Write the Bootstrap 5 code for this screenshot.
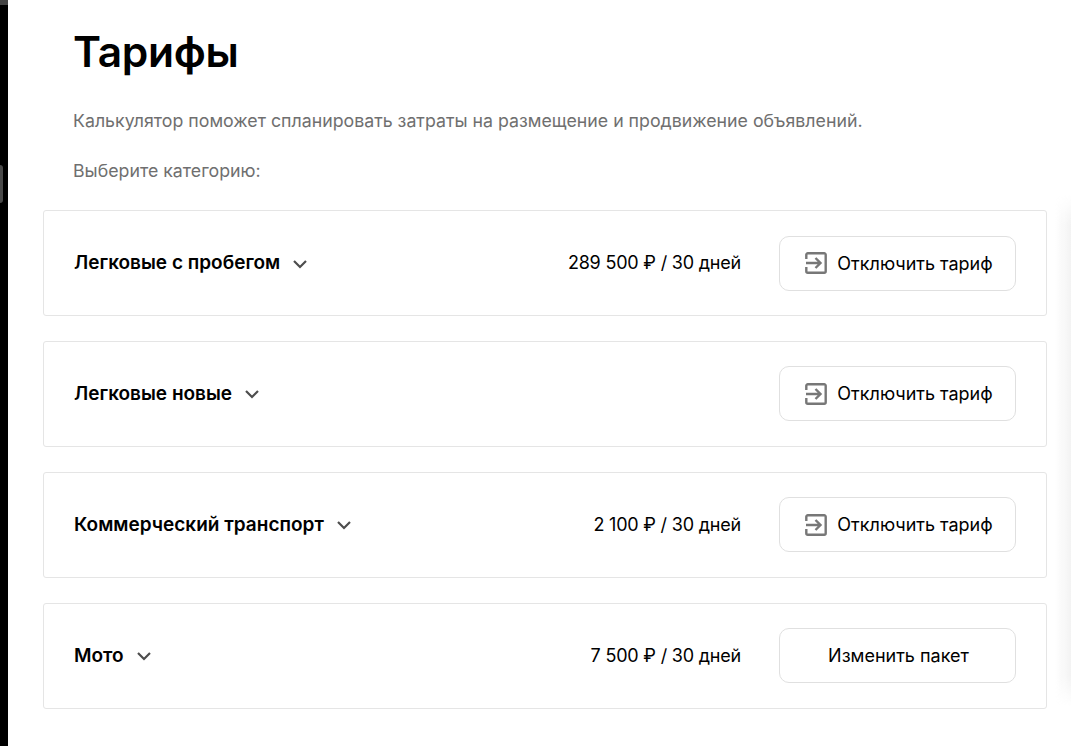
<!DOCTYPE html>
<html lang="ru">
<head>
<meta charset="utf-8">
<title>Тарифы</title>
<link href="https://cdn.jsdelivr.net/npm/bootstrap@5.3.0/dist/css/bootstrap.min.css" rel="stylesheet">
<style>
html,body{height:100%;overflow:hidden}
body{background:#fff;font-family:Inter,"Noto Sans",sans-serif;color:#000}
.shell{height:746px;position:relative}
.edge{width:8px;background:#000;position:relative;flex:none}
.edge::before{content:"";position:absolute;left:0;top:0;width:8px;height:5px;background:#444}
.edge::after{content:"";position:absolute;left:0;top:165px;width:3px;height:38px;background:#4a4a4a;border-radius:0 3px 3px 0}
.side-fade{position:absolute;right:0;top:195px;bottom:40px;width:16px;background:linear-gradient(to right,rgba(243,243,243,0),#f3f3f3);-webkit-mask-image:linear-gradient(to bottom,transparent,#000 30px,#000 calc(100% - 30px),transparent);mask-image:linear-gradient(to bottom,transparent,#000 30px,#000 calc(100% - 30px),transparent);pointer-events:none}
.main-area{flex:1;padding:0 24px 0 35px}
.page-title{font-size:42.5px;font-weight:600;line-height:48px;margin:28px 0 0 30px;letter-spacing:-.3px}
.intro{font-size:17.75px;line-height:20px;color:#6f6f6f;margin:0 0 0 30px}
.intro-a{margin-top:35px}
.intro-b{margin-top:30px;margin-bottom:29px}
.tariffs{gap:24.9px}
.tariff{height:106px;border:1px solid #e5e5e5;border-radius:3px;padding:0 30px;background:#fff}
.tariff-name{font-size:19px;font-weight:600;line-height:22px}
.chev{margin-left:12px;flex:none;margin-top:1px}
.tariff-price{font-size:18px;line-height:22px;margin-right:38px;letter-spacing:-.2px}
.tariff-btn{width:237px;height:55px;border:1px solid #e0e0e0;border-radius:10px;background:#fff;color:#000;font-size:18px;gap:9px;padding:0 0 0 2px}
.tariff-btn:hover{background:#fff;color:#000;border-color:#e0e0e0}
</style>
</head>
<body>
<div class="shell d-flex">
<div class="edge"></div>
<div class="main-area">
<h1 class="page-title">Тарифы</h1>
<p class="intro intro-a">Калькулятор поможет спланировать затраты на размещение и продвижение объявлений.</p>
<p class="intro intro-b">Выберите категорию:</p>
<div class="tariffs d-flex flex-column">
<div class="tariff d-flex align-items-center">
<span class="tariff-name">Легковые с пробегом</span>
<svg class="chev" width="16" height="10" viewBox="0 0 16 10"><path d="M2 2l6 6 6-6" fill="none" stroke="#4d4d4d" stroke-width="2.200"/></svg>
<span class="tariff-price ms-auto">289 500 ₽ / 30 дней</span>
<button class="btn tariff-btn d-flex align-items-center justify-content-center"><svg width="24" height="24" viewBox="0 0 24 24"><path d="M2.300 8V3.800A1.500 1.500 0 0 1 3.800 2.300h16.400A1.500 1.500 0 0 1 21.700 3.800v16.400a1.500 1.500 0 0 1-1.500 1.500H3.800a1.500 1.500 0 0 1-1.500-1.500V16M2 12h14.500M11.500 7l5 5-5 5" fill="none" stroke="#777" stroke-width="2.400"/></svg>Отключить тариф</button>
</div>
<div class="tariff d-flex align-items-center">
<span class="tariff-name">Легковые новые</span>
<svg class="chev" width="16" height="10" viewBox="0 0 16 10"><path d="M2 2l6 6 6-6" fill="none" stroke="#4d4d4d" stroke-width="2.200"/></svg>
<button class="btn tariff-btn d-flex align-items-center justify-content-center ms-auto"><svg width="24" height="24" viewBox="0 0 24 24"><path d="M2.300 8V3.800A1.500 1.500 0 0 1 3.800 2.300h16.400A1.500 1.500 0 0 1 21.700 3.800v16.400a1.500 1.500 0 0 1-1.500 1.500H3.800a1.500 1.500 0 0 1-1.500-1.500V16M2 12h14.500M11.500 7l5 5-5 5" fill="none" stroke="#777" stroke-width="2.400"/></svg>Отключить тариф</button>
</div>
<div class="tariff d-flex align-items-center">
<span class="tariff-name">Коммерческий транспорт</span>
<svg class="chev" width="16" height="10" viewBox="0 0 16 10"><path d="M2 2l6 6 6-6" fill="none" stroke="#4d4d4d" stroke-width="2.200"/></svg>
<span class="tariff-price ms-auto">2 100 ₽ / 30 дней</span>
<button class="btn tariff-btn d-flex align-items-center justify-content-center"><svg width="24" height="24" viewBox="0 0 24 24"><path d="M2.300 8V3.800A1.500 1.500 0 0 1 3.800 2.300h16.400A1.500 1.500 0 0 1 21.700 3.800v16.400a1.500 1.500 0 0 1-1.500 1.500H3.800a1.500 1.500 0 0 1-1.500-1.500V16M2 12h14.500M11.500 7l5 5-5 5" fill="none" stroke="#777" stroke-width="2.400"/></svg>Отключить тариф</button>
</div>
<div class="tariff d-flex align-items-center">
<span class="tariff-name">Мото</span>
<svg class="chev" width="16" height="10" viewBox="0 0 16 10"><path d="M2 2l6 6 6-6" fill="none" stroke="#4d4d4d" stroke-width="2.200"/></svg>
<span class="tariff-price ms-auto">7 500 ₽ / 30 дней</span>
<button class="btn tariff-btn d-flex align-items-center justify-content-center">Изменить пакет</button>
</div>
</div>
</div>
<div class="side-fade"></div>
</div>
<script src="https://cdn.jsdelivr.net/npm/bootstrap@5.3.0/dist/js/bootstrap.bundle.min.js"></script>
</body>
</html>
